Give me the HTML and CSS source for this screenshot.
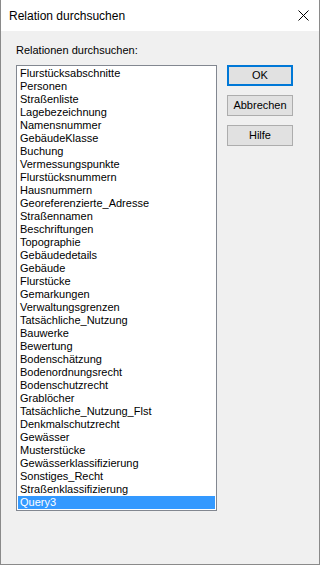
FILE: index.html
```html
<!DOCTYPE html>
<html>
<head>
<meta charset="utf-8">
<link rel="stylesheet" href="styles.css">
</head>
<body>
<div class="window">
  <div class="titlebar">
    <span class="title">Relation durchsuchen</span>
    <svg class="close" width="11" height="11" viewBox="0 0 11 11"><path d="M0.5 0.5L10.5 10.5M10.5 0.5L0.5 10.5" stroke="#000" stroke-width="1" fill="none"/></svg>
  </div>
  <div class="content">
    <div class="left">
      <div class="label">Relationen durchsuchen:</div>
      <div class="listbox">
        <div class="item">Flurstücksabschnitte</div>
        <div class="item">Personen</div>
        <div class="item">Straßenliste</div>
        <div class="item">Lagebezeichnung</div>
        <div class="item">Namensnummer</div>
        <div class="item">GebäudeKlasse</div>
        <div class="item">Buchung</div>
        <div class="item">Vermessungspunkte</div>
        <div class="item">Flurstücksnummern</div>
        <div class="item">Hausnummern</div>
        <div class="item">Georeferenzierte_Adresse</div>
        <div class="item">Straßennamen</div>
        <div class="item">Beschriftungen</div>
        <div class="item">Topographie</div>
        <div class="item">Gebäudedetails</div>
        <div class="item">Gebäude</div>
        <div class="item">Flurstücke</div>
        <div class="item">Gemarkungen</div>
        <div class="item">Verwaltungsgrenzen</div>
        <div class="item">Tatsächliche_Nutzung</div>
        <div class="item">Bauwerke</div>
        <div class="item">Bewertung</div>
        <div class="item">Bodenschätzung</div>
        <div class="item">Bodenordnungsrecht</div>
        <div class="item">Bodenschutzrecht</div>
        <div class="item">Grablöcher</div>
        <div class="item">Tatsächliche_Nutzung_Flst</div>
        <div class="item">Denkmalschutzrecht</div>
        <div class="item">Gewässer</div>
        <div class="item">Musterstücke</div>
        <div class="item">Gewässerklassifizierung</div>
        <div class="item">Sonstiges_Recht</div>
        <div class="item">Straßenklassifizierung</div>
        <div class="item selected">Query3</div>
      </div>
    </div>
    <div class="buttons">
      <div class="btn default">OK</div>
      <div class="btn">Abbrechen</div>
      <div class="btn">Hilfe</div>
    </div>
  </div>
</div>
</body>
</html>
```

FILE: styles.css
```css
html, body {
  margin: 0;
  padding: 0;
}
body {
  width: 320px;
  height: 565px;
  overflow: hidden;
  font-family: "Liberation Sans", Arial, sans-serif;
}
.window {
  box-sizing: border-box;
  width: 320px;
  height: 565px;
  border: 1px solid #8a8a8a;
  border-top: none;
  background: #f0f0f0;
  display: flex;
  flex-direction: column;
}
.titlebar {
  height: 31px;
  background: #ffffff;
  display: flex;
  align-items: center;
  justify-content: space-between;
  flex: none;
}
.title {
  padding-left: 8px;
  font-size: 12px;
  color: #000;
  margin-top: 1px;
}
.close {
  margin-right: 10px;
  display: block;
}
.content {
  display: flex;
  padding: 13px 0 0 15px;
  gap: 10px;
  align-items: flex-start;
}
.left {
  display: flex;
  flex-direction: column;
}
.label {
  font-size: 11px;
  line-height: 13px;
  height: 13px;
  margin-bottom: 8px;
  color: #000;
}
.listbox {
  box-sizing: border-box;
  width: 201px;
  height: 446px;
  border: 1px solid #828790;
  background: #fff;
  padding: 1px;
}
.item {
  height: 13px;
  line-height: 13px;
  font-size: 11px;
  padding-left: 2px;
  color: #000;
  white-space: nowrap;
}
.item.selected {
  background: #3399ff;
  color: #fff;
}
.buttons {
  display: flex;
  flex-direction: column;
  gap: 9px;
  padding-top: 21px;
}
.btn {
  box-sizing: border-box;
  width: 66px;
  height: 21px;
  border: 1px solid #adadad;
  background: #e1e1e1;
  font-size: 11px;
  line-height: 19px;
  text-align: center;
  color: #000;
}
.btn.default {
  border: 2px solid #0078d7;
  line-height: 17px;
}
```
